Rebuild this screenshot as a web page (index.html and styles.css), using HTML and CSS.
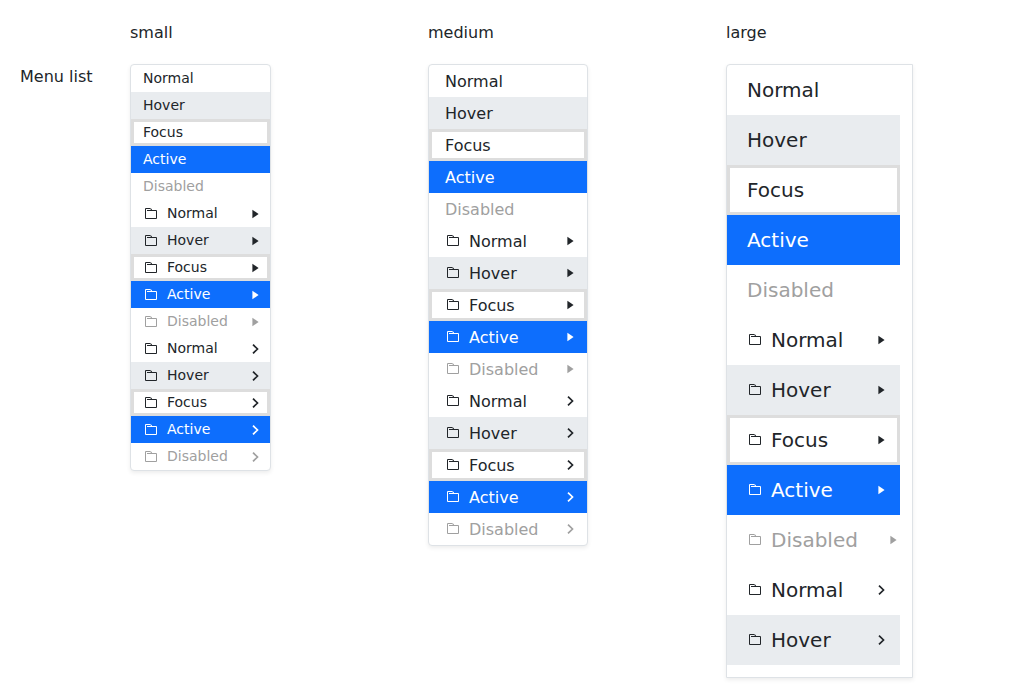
FILE: index.html
```
<!DOCTYPE html>
<html lang="en">
<head>
<meta charset="utf-8">
<title>Menu list</title>
<link rel="stylesheet" href="styles.css">
</head>
<body>
<svg class="defs" aria-hidden="true">
  <symbol id="folder" viewBox="0 0 16 16"><path d="M7 2.5H2.5v10h11v-8H4M7 2.6L9 3.6" fill="none" stroke="currentColor"/></symbol>
  <symbol id="caret" viewBox="0 0 16 16"><path d="M5.4 3.7v8.6L11.6 8z" fill="currentColor"/></symbol>
  <symbol id="chevron" viewBox="0 0 16 16"><path d="M6 3.6L10.5 8 6 12.4" fill="none" stroke="currentColor" stroke-width="1.7"/></symbol>
</svg>
<main class="board">
  <h1 class="label">Menu list</h1>
  <section class="column">
    <h2 class="size">small</h2>
    <ul class="menu menu-sm"></ul>
  </section>
  <section class="column">
    <h2 class="size">medium</h2>
    <ul class="menu menu-md"></ul>
  </section>
  <section class="column">
    <h2 class="size">large</h2>
    <ul class="menu menu-lg"></ul>
  </section>
</main>
<script src="menu.js"></script>
</body>
</html>
```
FILE: styles.css
```
* { box-sizing: border-box; }
body {
  margin: 0;
  height: 698px;
  overflow: hidden;
  background: #fff;
  color: #212529;
  font: 16px/24px "DejaVu Sans", sans-serif;
}
.defs { display: none; }
.board {
  display: grid;
  grid-template-columns: 110px 298px 298px 298px;
  align-items: start;
  padding: 21px 0 0 20px;
}
.label, .size { margin: 0; font-size: 16px; font-weight: 400; }
.label { padding-top: 44px; }
.size { margin-bottom: 19px; }
.menu {
  margin: 0;
  padding: 0;
  list-style: none;
  overflow: hidden;
  border: 1px solid #dee2e6;
  border-radius: 4px;
  background: #fff;
  box-shadow: 0 2px 4px rgba(0, 0, 0, .075);
}
.menu-sm { width: 141px; font-size: 14px; }
.menu-md { width: 160px; }
.menu-lg {
  width: 187px;
  height: 614px;
  padding-bottom: 12px;
  border-radius: 4px 0 0 0;
  font-size: 20px;
}
.item { display: flex; align-items: center; gap: 8px; white-space: nowrap; }
.menu-sm .item { height: 27px; padding: 0 7px 0 12px; }
.menu-md .item { height: 32px; padding: 0 9px 0 16px; }
.menu-lg .item { width: 173px; height: 50px; padding: 0 11px 0 20px; }
.menu-lg .disabled { width: 185px; }
.text { flex: 1; }
.menu-sm .text { padding-bottom: 2px; }
.menu-md .text { padding-top: 2px; }
.icon { flex: none; width: 16px; height: 16px; }
.menu-sm .icon { margin-top: 1px; }
.hover { background: #e9ecef; }
.focus { box-shadow: inset 0 0 0 3px #ddd; }
.active { background: #0d6efd; color: #fff; }
.disabled { color: #a0a0a0; }
```
FILE: menu.js
```
const states = ["Normal", "Hover", "Focus", "Active", "Disabled"];
const icon = (name) => `<svg class="icon"><use href="#${name}"/></svg>`;
const rows = [null, "caret", "chevron"].flatMap((arrow) =>
  states.map((state) =>
    `<li class="item ${state.toLowerCase()}">${arrow ? icon("folder") : ""}<span class="text">${state}</span>${arrow ? icon(arrow) : ""}</li>`
  )
);
document.querySelectorAll(".menu").forEach((menu) => {
  const count = menu.classList.contains("menu-lg") ? 12 : rows.length;
  menu.innerHTML = rows.slice(0, count).join("");
});
```
